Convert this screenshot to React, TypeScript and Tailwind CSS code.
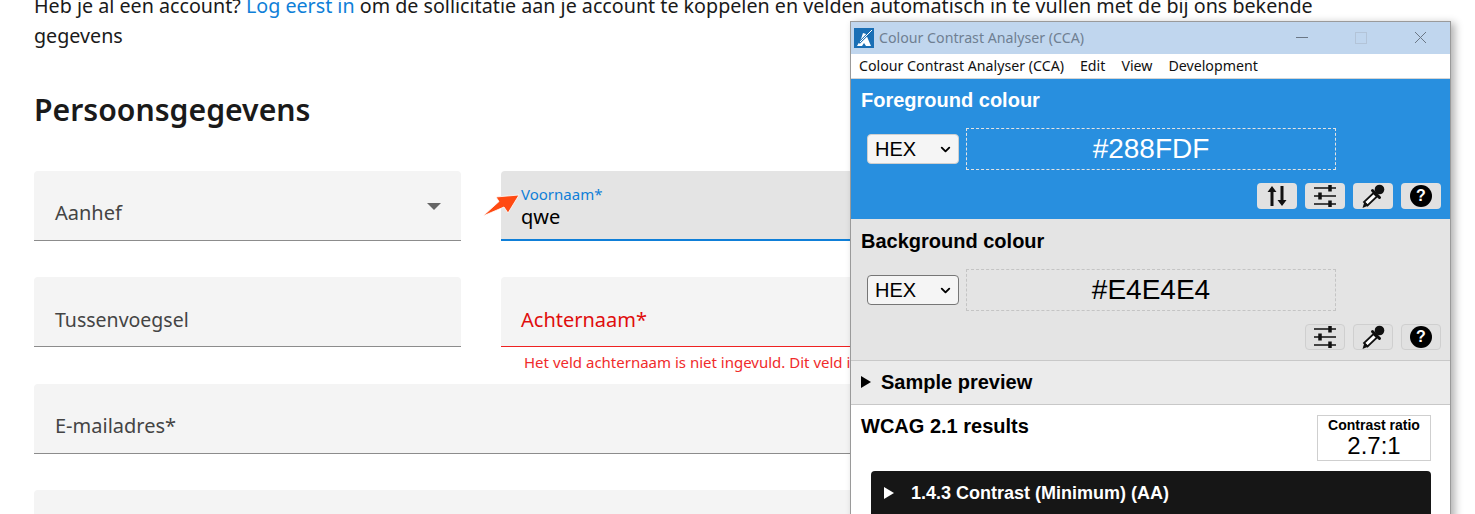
import React from 'react';
import { ChevronDown } from 'lucide-react';

const pageFont = "font-['Noto_Sans',sans-serif]";
const appFont = "font-['Liberation_Sans',Arial,sans-serif]";
const winFont = "font-['Noto_Sans',sans-serif]";

const Tuner = () => (
  <svg width="24" height="22" viewBox="0 0 24 22" fill="none" stroke="#111" strokeWidth="1.6">
    <path d="M1 3h22M1 11h22M1 19h22" />
    <path d="M17 0v6.500M7 7.500v7M17 15.500v6.500" strokeWidth="3.500" />
  </svg>
);

const Dropper = () => (
  <svg width="24" height="24" viewBox="0 0 24 24">
    <circle cx="18.500" cy="5.500" r="4.800" fill="#111" />
    <path d="M11.500 6.500l7 7" stroke="#111" strokeWidth="3" strokeLinecap="round" />
    <path d="M12.500 9l3.500 3.500-9.500 9-3.500-3.500z" fill="#fff" stroke="#111" strokeWidth="1.800" />
    <path d="M3.500 17.500l4 4L1.500 24z" fill="#111" />
  </svg>
);

const Help = () => (
  <div className={`w-[22px] h-[22px] rounded-full bg-black flex items-center justify-center text-white text-[16px] font-bold leading-none ${appFont}`}>
    ?
  </div>
);

const Swap = () => (
  <svg width="22" height="22" viewBox="0 0 22 22" fill="#111">
    <path d="M6 1l4.500 6H7.500v14h-3V7H1.500z" />
    <path d="M16 21l-4.500-6h3V1h3v14h3z" />
  </svg>
);

const ToolButton = ({ children, outlined }: { children: React.ReactNode; outlined?: boolean }) => (
  <div className={`w-[40px] h-[26px] rounded-[4px] bg-[#e1e1e1] flex items-center justify-center ${outlined ? 'border border-[#cfcfcf]' : ''}`}>
    {children}
  </div>
);

const ColourRow = ({ value, light }: { value: string; light?: boolean }) => (
  <div className="flex items-center gap-[7px] pl-[16px]">
    <div className={`w-[92px] h-[30px] rounded-[4px] bg-[#f5f5f5] flex items-center justify-between pl-[7px] pr-[5px] text-[20px] text-black ${appFont} ${light ? 'border border-[#767676]' : 'border border-[#cfcfcf]'}`}>
      HEX
      <ChevronDown size={15} strokeWidth={3} />
    </div>
    <div className={`w-[370px] h-[42px] border border-dashed flex items-center justify-center text-[28px] ${appFont} ${light ? 'border-[#c4c4c4] text-black' : 'border-[#e4e4e4] text-white'}`}>
      {value}
    </div>
  </div>
);

export default function App() {
  return (
    <div className={`relative w-[1475px] h-[514px] overflow-hidden bg-white ${pageFont}`}>
      <div className="pl-[34px] -mt-[9px]">
        <p className="w-[1300px] text-[19.700px] leading-[30px] text-[#1a1a1a]">
          Heb je al een account? <span className="text-[#0f7fd8]">Log eerst in</span> om de sollicitatie aan je account te koppelen en velden automatisch in te vullen met de bij ons bekende gegevens
        </p>
        <h2 className="mt-[39px] text-[30.200px] leading-[40px] font-semibold text-[#1a1a1a]">Persoonsgegevens</h2>

        <div className="mt-[41px] w-[894px] grid grid-cols-2 gap-x-[40px]">
          <div className="relative h-[70px] bg-[#f4f4f4] rounded-t-[4px] border-b border-[#8c8c8c] px-[21px] pt-[28px] text-[20px] leading-[27px] text-[#444]">
            Aanhef
            <div className="absolute right-[20px] top-[32px] w-0 h-0 border-x-[7px] border-x-transparent border-t-[7px] border-t-[#666]" />
          </div>
          <div className="h-[70px] bg-[#e4e4e4] rounded-t-[4px] border-b-2 border-[#0f7fd8] px-[20px] pt-[14px]">
            <div className="text-[15px] leading-[19px] text-[#0f7fd8]">Voornaam*</div>
            <div className="text-[20px] leading-[25px] text-black">qwe</div>
          </div>
        </div>

        <div className="mt-[36px] w-[894px] grid grid-cols-2 gap-x-[40px]">
          <div className="h-[70px] bg-[#f4f4f4] rounded-t-[4px] border-b border-[#8c8c8c] px-[21px] pt-[29px] text-[19.500px] leading-[27px] text-[#444]">
            Tussenvoegsel
          </div>
          <div>
            <div className="h-[70px] bg-[#f4f4f4] rounded-t-[4px] border-b border-[#ee2222] px-[20px] pt-[29px] text-[20px] leading-[27px] text-[#e00d0d]">
              Achternaam*
            </div>
            <div className="pl-[23px] text-[15px] leading-[20px] pt-[5px] whitespace-nowrap text-[#f02b2b]">
              Het veld achternaam is niet ingevuld. Dit veld is verplicht.
            </div>
          </div>
        </div>

        <div className="mt-[12px] w-[894px] h-[70px] bg-[#f4f4f4] rounded-t-[4px] border-b border-[#8c8c8c] px-[21px] pt-[28px] text-[20px] leading-[27px] text-[#444]">
          E-mailadres*
        </div>
        <div className="mt-[36px] w-[894px] h-[70px] bg-[#f4f4f4] rounded-t-[4px]" />
      </div>

      {/* arrow annotation */}
      <svg className="absolute left-[482px] top-[192px]" width="38" height="26" viewBox="0 0 38 26">
        <path d="M1 24L17 9.500 14 5 37 3 26 21 22 15z" fill="#ff4a12" stroke="#fff" strokeWidth="0.800" />
      </svg>

      {/* floating CCA window */}
      <div className="absolute left-[850px] top-[21px] w-[601px] h-[520px] border border-[#9a9a9a] shadow-[4px_2px_8px_rgba(0,0,0,0.3)] bg-white">
        <div className={`h-[32px] bg-[#c0d6ee] flex items-center pl-[3px] pb-[1px] text-[14.200px] text-[#6f7f92] ${winFont}`}>
          <svg width="20" height="20" viewBox="0 0 20 20" className="mr-[5px] mt-[1px] shrink-0">
            <rect width="20" height="20" fill="#1a6fb5" />
            <path d="M3 18l4-7 2-6 3 1 2 5 3 7h-5l-2-3-2 3z" fill="#fff" />
            <path d="M18 2L5 15" stroke="#1a6fb5" strokeWidth="2.400" />
            <path d="M18 2L6 14" stroke="#fff" strokeWidth="1" />
          </svg>
          Colour Contrast Analyser (CCA)
          <div className="ml-auto flex items-center text-[#6b7785]">
            <div className="w-[12px] h-px bg-[#6b7785] mr-[47px]" />
            <div className="w-[12px] h-[12px] border border-[#b3c4d8] mr-[47px]" />
            <svg width="13" height="13" viewBox="0 0 13 13" className="mr-[23px]" stroke="#6b7785" strokeWidth="1">
              <path d="M1 1l11 11M12 1L1 12" />
            </svg>
          </div>
        </div>
        <div className={`h-[25px] bg-white border-b border-[#d4d4d4] flex items-center gap-[16px] pl-[8px] pb-[1px] text-[14.200px] text-[#111] ${winFont}`}>
          <span>Colour Contrast Analyser (CCA)</span>
          <span>Edit</span>
          <span>View</span>
          <span>Development</span>
        </div>

        <div className={`h-[140px] bg-[#288fdf] text-white ${appFont}`}>
          <div className="pl-[10px] pt-[10px] text-[20px] leading-[22px] font-bold">Foreground colour</div>
          <div className="mt-[17px]">
            <ColourRow value="#288FDF" />
          </div>
          <div className="mt-[13px] pr-[9px] flex justify-end gap-[8px]">
            <ToolButton><Swap /></ToolButton>
            <ToolButton><Tuner /></ToolButton>
            <ToolButton><Dropper /></ToolButton>
            <ToolButton><Help /></ToolButton>
          </div>
        </div>

        <div className={`h-[142px] bg-[#e4e4e4] text-black border-b border-[#c8c8c8] ${appFont}`}>
          <div className="pl-[10px] pt-[11px] text-[20px] leading-[22px] font-bold">Background colour</div>
          <div className="mt-[17px]">
            <ColourRow value="#E4E4E4" light />
          </div>
          <div className="mt-[13px] pr-[9px] flex justify-end gap-[8px]">
            <ToolButton outlined><Tuner /></ToolButton>
            <ToolButton outlined><Dropper /></ToolButton>
            <ToolButton outlined><Help /></ToolButton>
          </div>
        </div>

        <div className={`h-[44px] bg-[#ebebeb] border-b border-[#c8c8c8] flex items-center pl-[10px] pb-[2px] text-[20px] font-bold text-black ${appFont}`}>
          <div className="w-0 h-0 border-y-[6.500px] border-y-transparent border-l-[10px] border-l-black mr-[10px]" />
          Sample preview
        </div>

        <div className={`bg-white ${appFont}`}>
          <div className="flex justify-between pl-[10px] pr-[19px] pt-[10px]">
            <div className="text-[20px] leading-[22px] font-bold text-black">WCAG 2.1 results</div>
            <div className="w-[114px] h-[46px] border border-[#cfcfcf] flex flex-col items-center text-black">
              <div className="text-[14px] leading-[16px] font-bold pt-[1px]">Contrast ratio</div>
              <div className="text-[24px] leading-[26px]">2.7:1</div>
            </div>
          </div>
          <div className="mt-[10px] ml-[20px] w-[560px] h-[60px] bg-[#161616] rounded-[4px] flex items-start pl-[13px] pt-[12px] text-[18px] leading-[20px] font-bold text-white">
            <div className="w-0 h-0 mt-[4px] border-y-[6px] border-y-transparent border-l-[10px] border-l-white mr-[17px]" />
            1.4.3 Contrast (Minimum) (AA)
          </div>
        </div>
      </div>
    </div>
  );
}
